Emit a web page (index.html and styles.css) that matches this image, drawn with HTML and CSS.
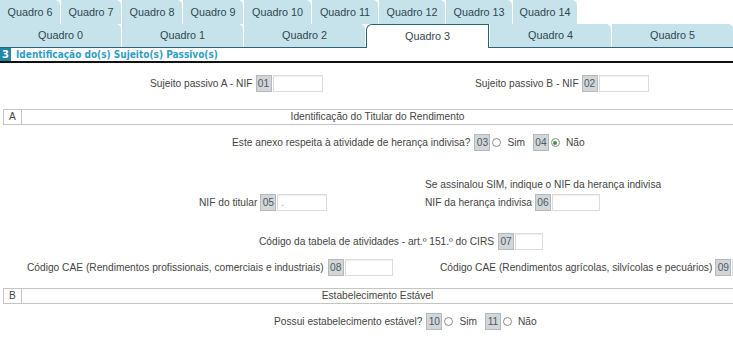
FILE: index.html
```html
<!DOCTYPE html>
<html lang="pt">
<head>
    <meta charset="UTF-8">
    <title>Anexo - Quadro 3</title>
    <link rel="stylesheet" href="styles.css">
</head>
<body>
    <!-- Tabs -->
    <div class="tabs top-row">
        <div class="tab w60">Quadro 6</div>
        <div class="tab w60">Quadro 7</div>
        <div class="tab w60">Quadro 8</div>
        <div class="tab w60">Quadro 9</div>
        <div class="tab w67">Quadro 10</div>
        <div class="tab w66">Quadro 11</div>
        <div class="tab w66">Quadro 12</div>
        <div class="tab w66">Quadro 13</div>
        <div class="tab w64">Quadro 14</div>
    </div>
    <div class="tabs main-row">
        <div class="tab">Quadro 0</div>
        <div class="tab">Quadro 1</div>
        <div class="tab">Quadro 2</div>
        <div class="tab active">Quadro 3</div>
        <div class="tab">Quadro 4</div>
        <div class="tab">Quadro 5</div>
    </div>

    <!-- Quadro 3 -->
    <div class="section-title">
        <span class="num">3</span>
        <span class="title">Identificação do(s) Sujeito(s) Passivo(s)</span>
    </div>

    <div class="pair row-sujeito">
        <div class="field grp-a">
            <label>Sujeito passivo A - NIF</label><span class="code">01</span><input type="text" class="inp w50">
        </div>
        <div class="field grp-b">
            <label>Sujeito passivo B - NIF</label><span class="code">02</span><input type="text" class="inp w50">
        </div>
    </div>

    <div class="sub-header">
        <span class="letter">A</span>
        <span class="sub-title">Identificação do Titular do Rendimento</span>
    </div>

    <div class="field row-heranca">
        <label class="wide">Este anexo respeita à atividade de herança indivisa?</label>
        <span class="code">03</span><span class="radio"></span><span class="opt">Sim</span>
        <span class="code">04</span><span class="radio checked"></span><span class="opt">Não</span>
    </div>

    <div class="row-note">Se assinalou SIM, indique o NIF da herança indivisa</div>

    <div class="pair row-nif">
        <div class="field grp-titular">
            <label>NIF do titular</label><span class="code">05</span><input type="text" class="inp w50" value=".">
        </div>
        <div class="field grp-heranca">
            <label>NIF da herança indivisa</label><span class="code">06</span><input type="text" class="inp w48">
        </div>
    </div>

    <div class="field row-atividade">
        <label class="wide">Código da tabela de atividades - art.º 151.º do CIRS</label><span class="code">07</span><input type="text" class="inp w27">
    </div>

    <div class="pair row-cae">
        <div class="field grp-cae1">
            <label class="wide">Código CAE (Rendimentos profissionais, comerciais e industriais)</label><span class="code">08</span><input type="text" class="inp w48">
        </div>
        <div class="field grp-cae2">
            <label>Código CAE (Rendimentos agrícolas, silvícolas e pecuários)</label><span class="code">09</span><input type="text" class="inp w48">
        </div>
    </div>

    <div class="sub-header">
        <span class="letter">B</span>
        <span class="sub-title">Estabelecimento Estável</span>
    </div>

    <div class="field row-estavel">
        <label class="wide">Possui estabelecimento estável?</label>
        <span class="code">10</span><span class="radio"></span><span class="opt">Sim</span>
        <span class="code">11</span><span class="radio"></span><span class="opt">Não</span>
    </div>
</body>
</html>
```

FILE: styles.css
```css
body {
    margin: 0;
    font-family: "Liberation Sans", Arial, sans-serif;
    font-size: 10.2px;
    color: #454545;
    background: #fff;
    overflow: hidden;
    width: 733px;
}

/* tabs */
.tabs {
    display: flex;
    gap: 1px;
}
.top-row {
    height: 24px;
}
.tab {
    background: #c6e3eb;
    color: #2f4650;
    font-size: 10.8px;
    text-align: center;
    line-height: 24px;
    border-top-right-radius: 5px;
    box-sizing: border-box;
}
.w60 { width: 60px; }
.w64 { width: 64px; }
.w66 { width: 66px; }
.w67 { width: 67px; }
.main-row {
    height: 23px;
    border-bottom: 1px solid #2b6275;
}
.main-row .tab {
    flex: 1;
    line-height: 23px;
}
.main-row .active {
    background: #fff;
    border: 1px solid #2b6275;
    border-bottom: none;
    border-radius: 6px 0 0 0;
    line-height: 22px;
    margin-bottom: -1px;
    height: 24px;
}

/* section title */
.section-title {
    display: flex;
    align-items: center;
    height: 13px;
    border-bottom: 2px solid #111;
}
.section-title .num {
    background: #1f86a6;
    color: #fff;
    font-family: "DejaVu Sans", sans-serif;
    font-weight: bold;
    font-size: 10px;
    width: 11px;
    height: 13px;
    line-height: 13px;
    text-align: center;
}
.section-title .title {
    color: #2f9dc4;
    font-family: "DejaVu Sans Condensed", "DejaVu Sans", sans-serif;
    font-weight: bold;
    font-size: 10px;
    margin-left: 5px;
}

/* fields */
.field {
    display: flex;
    align-items: center;
    white-space: nowrap;
}
.field label {
    margin-right: 3px;
}
.field label.wide {
    margin-right: 4px;
}
.code {
    display: inline-block;
    background: #d3d6d8;
    border: 1px solid #b6b9bb;
    color: #4c5a64;
    width: 14px;
    height: 15px;
    line-height: 15px;
    text-align: center;
    box-sizing: content-box;
}
.inp {
    height: 17px;
    border: 1px solid #dcdcdc;
    box-shadow: inset 0 1px 1px #eee;
    box-sizing: border-box;
    margin: 0 0 0 1px;
    padding: 0 3px;
    font: inherit;
    color: #999;
}
.w50 { width: 50px; }
.w48 { width: 48px; }
.w27 { width: 28px; }

.pair {
    display: grid;
    grid-template-columns: 366px 1fr;
}

.row-sujeito {
    margin-top: 12px;
    height: 17px;
}
.grp-a { padding-left: 150px; }
.grp-b { padding-left: 109px; }

/* sub headers */
.sub-header {
    display: flex;
    margin-left: 3px;
    height: 14px;
    border-top: 1px solid #c4c4c4;
    border-bottom: 1px solid #c4c4c4;
    line-height: 14px;
}
.sub-header .letter {
    width: 17px;
    text-align: center;
    border-left: 1px solid #c4c4c4;
    border-right: 1px solid #c4c4c4;
}
.sub-header .sub-title {
    flex: 1;
    text-align: center;
}
.row-sujeito + .sub-header {
    margin-top: 17px;
}

.row-heranca {
    margin-top: 9px;
    padding-left: 232px;
    height: 17px;
}
.radio {
    display: inline-block;
    width: 7px;
    height: 7px;
    border: 1px solid #8a8a8a;
    border-radius: 50%;
    margin: 0 6px 0 2px;
    background: #fff;
    position: relative;
}
.radio.checked::after {
    content: "";
    position: absolute;
    left: 1.5px;
    top: 1.5px;
    width: 4px;
    height: 4px;
    border-radius: 50%;
    background: #3a9a3a;
}
.opt {
    margin-right: 8px;
}

.row-note {
    margin-top: 28px;
    padding-left: 425px;
    height: 14px;
}
.row-nif {
    margin-top: 0;
    height: 18px;
}
.grp-titular { padding-left: 199px; }
.grp-heranca { padding-left: 59px; }

.row-atividade {
    margin-top: 22px;
    padding-left: 259px;
    height: 17px;
}

.row-cae {
    margin-top: 9px;
    height: 17px;
    grid-template-columns: 413px 1fr;
}
.grp-cae1 { padding-left: 27px; }
.grp-cae2 { padding-left: 27px; }
.row-cae + .sub-header {
    margin-top: 12px;
}

.row-estavel {
    margin-top: 9px;
    padding-left: 274px;
    height: 17px;
}
```
